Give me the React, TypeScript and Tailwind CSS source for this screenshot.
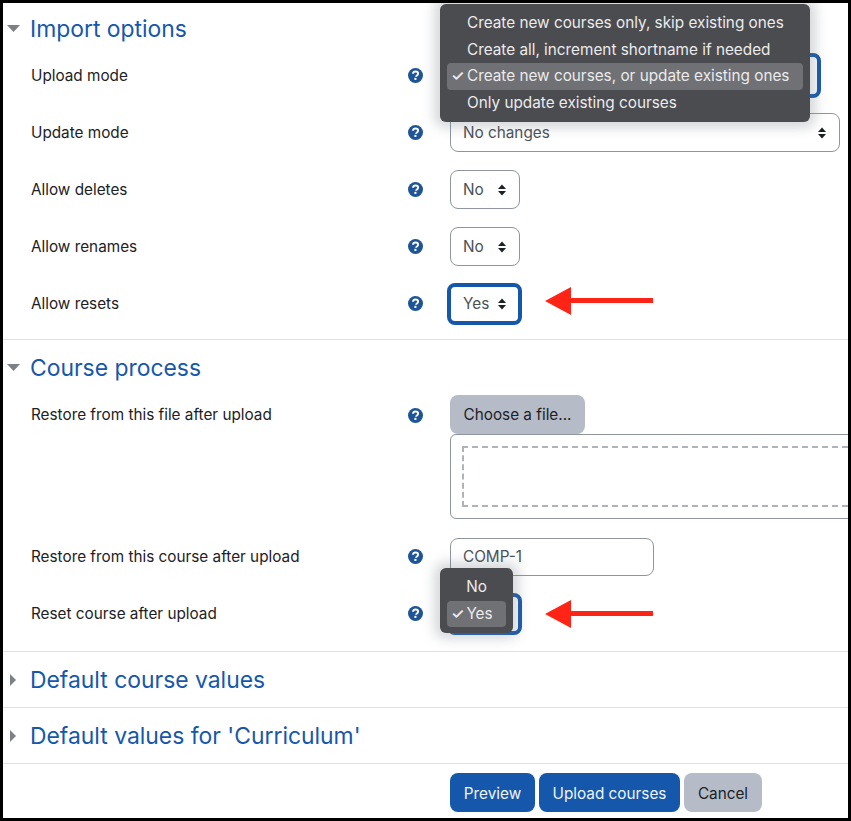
import React from 'react';

const BLUE = '#1558ab';

function HelpIcon() {
  return (
    <svg width="15" height="15" viewBox="0 0 16 16" className="shrink-0">
      <circle cx="8" cy="8" r="8" fill="#1f5497" />
      <path d="M5.3 6.2C5.4 4.6 6.6 3.7 8.1 3.7c1.6 0 2.7.9 2.7 2.2 0 1-.6 1.6-1.3 2.1-.6.4-.9.7-.9 1.3" fill="none" stroke="#fff" strokeWidth="2" />
      <rect x="6.8" y="10.5" width="2.2" height="2.2" fill="#fff" />
    </svg>
  );
}

function Carets() {
  return (
    <svg width="10" height="14" viewBox="0 0 10 14" className="shrink-0">
      <path d="M5 1.5 9 6H1zM5 12.5 1 8h8z" fill="#1d2125" />
    </svg>
  );
}

function Select({ label, width, focused, height }: { label: string; width: string; focused?: boolean; height?: string }) {
  return (
    <div className={`${width} ${height ?? (focused ? 'h-[42px]' : 'h-[39px]')} flex items-center justify-between rounded-lg bg-white text-[#495057] ${focused ? 'border-4 border-[#1558ab] -ml-[3px] pl-[12px] pr-[11px]' : 'border border-[#8f959e] pl-[12px] pr-[12px]'}`}>
      <span className="pt-[1px]">{label}</span>
      <Carets />
    </div>
  );
}

function Row({ label, children }: { label: string; children: React.ReactNode }) {
  return (
    <div className="h-[57px] flex items-center text-[#1d2125]">
      <div className="w-[447px] pl-[28px] pr-[27px] shrink-0 flex items-center justify-between">
        <span className="pt-[1px]">{label}</span>
        <HelpIcon />
      </div>
      <div className="flex-1 min-w-0">{children}</div>
    </div>
  );
}

function Section({ title, open, className }: { title: string; open?: boolean; className?: string }) {
  return (
    <div className={`flex items-center ${className ?? ''}`}>
      <div className="w-[27px] flex justify-start">
        {open ? (
          <svg width="13" height="7" viewBox="0 0 13 7" className="ml-[4px]">
            <path d="M0 0h13L6.5 7z" fill="#7d8186" />
          </svg>
        ) : (
          <svg width="6" height="12" viewBox="0 0 6 12" className="ml-[7px]">
            <path d="M0 0l6 6-6 6z" fill="#7d8186" />
          </svg>
        )}
      </div>
      <h3 className="text-[22.9px] leading-none font-normal pt-[2px]" style={{ color: BLUE }}>{title}</h3>
    </div>
  );
}

function Arrow({ className }: { className?: string }) {
  return (
    <svg width="108" height="28" viewBox="0 0 108 28" className={className}>
      <path d="M0 14 26 0v11h82v5H26v12z" fill="#ff2416" />
    </svg>
  );
}

function Menu({ items, className, center }: { items: { text: string; checked?: boolean }[]; className: string; center?: boolean }) {
  return (
    <div className={`absolute z-10 rounded-md bg-[#4b4c50] px-[7px] py-[6px] text-[#ebebec] shadow-[0_0_12px_6px_rgba(120,125,135,0.3)] ${className}`}>
      {items.map((item) => (
        <div key={item.text} className={`h-[26.5px] flex items-center rounded ${item.checked ? 'bg-[#707175]' : ''} ${center ? 'justify-center' : 'pl-[20px]'} relative`}>
          {item.checked && <span className="absolute left-[4px] text-[15px] font-semibold">✓</span>}
          <span className={`pt-[1px] ${center && item.checked ? 'ml-[6px]' : ''}`}>{item.text}</span>
        </div>
      ))}
    </div>
  );
}

export default function App() {
  return (
    <div className="relative w-[851px] h-[821px] overflow-hidden border-[3px] border-black bg-white text-[15.3px]" style={{ fontFamily: 'Inter, "Liberation Sans", sans-serif' }}>
      <Section title="Import options" open className="h-[44px] pt-[6px]" />

      <Row label="Upload mode">
        <Select label="Create new courses, or update existing ones" width="w-[374px]" height="h-[45px]" focused />
      </Row>
      <Row label="Update mode">
        <Select label="No changes" width="w-[390px]" />
      </Row>
      <Row label="Allow deletes">
        <Select label="No" width="w-[70px]" />
      </Row>
      <Row label="Allow renames">
        <Select label="No" width="w-[70px]" />
      </Row>
      <Row label="Allow resets">
        <div className="flex items-center gap-[23px]">
          <Select label="Yes" width="w-[75px]" focused />
          <Arrow className="-mt-[6px]" />
        </div>
      </Row>

      <div className="mt-[7px] border-t border-[#dee2e6]" />
      <Section title="Course process" open className="h-[55px]" />

      <div className="flex h-[125px] text-[#1d2125]">
        <div className="w-[447px] pl-[28px] pr-[27px] h-[40px] shrink-0 flex items-center justify-between">
          <span className="pt-[1px]">Restore from this file after upload</span>
          <HelpIcon />
        </div>
        <div className="w-[420px] shrink-0">
          <div className="w-[135px] h-[39px] pt-[2px] rounded-lg bg-[#b5bcc8] flex items-center justify-center">Choose a file...</div>
          <div className="h-[85px] border border-[#8f959e] rounded-md p-[11px]">
            <div className="h-[61px] border-2 border-dashed border-[#b0b4b8]" />
          </div>
        </div>
      </div>

      <div className="h-[8px]" />
      <Row label="Restore from this course after upload">
        <div className="w-[204px] h-[38px] pt-[1px] rounded-lg border border-[#8f959e] flex items-center pl-[12px] text-[#495057]">COMP-1</div>
      </Row>
      <Row label="Reset course after upload">
        <div className="flex items-center gap-[23px]">
          <Select label="Yes" width="w-[75px]" focused />
          <Arrow />
        </div>
      </Row>

      <div className="mt-[9px] border-t border-[#dee2e6]" />
      <Section title="Default course values" className="h-[55px]" />
      <div className="border-t border-[#dee2e6]" />
      <Section title="Default values for 'Curriculum'" className="h-[55px]" />
      <div className="border-t border-[#dee2e6]" />

      <div className="flex gap-[4px] pl-[447px] pt-[9px]">
        <div className="w-[85px] h-[39px] pt-[3px] rounded-lg bg-[#1558ab] text-[#f0f4f9] flex items-center justify-center">Preview</div>
        <div className="w-[141px] h-[39px] pt-[3px] rounded-lg bg-[#1558ab] text-[#f0f4f9] flex items-center justify-center">Upload courses</div>
        <div className="w-[78px] h-[39px] pt-[3px] rounded-lg bg-[#b5bcc8] text-[#1d2125] flex items-center justify-center">Cancel</div>
      </div>

      <Menu
        className="left-[437px] top-[1px] w-[370px]"
        items={[
          { text: 'Create new courses only, skip existing ones' },
          { text: 'Create all, increment shortname if needed' },
          { text: 'Create new courses, or update existing ones', checked: true },
          { text: 'Only update existing courses' },
        ]}
      />
      <Menu
        center
        className="left-[437px] top-[565px] w-[73px]"
        items={[{ text: 'No' }, { text: 'Yes', checked: true }]}
      />
    </div>
  );
}
